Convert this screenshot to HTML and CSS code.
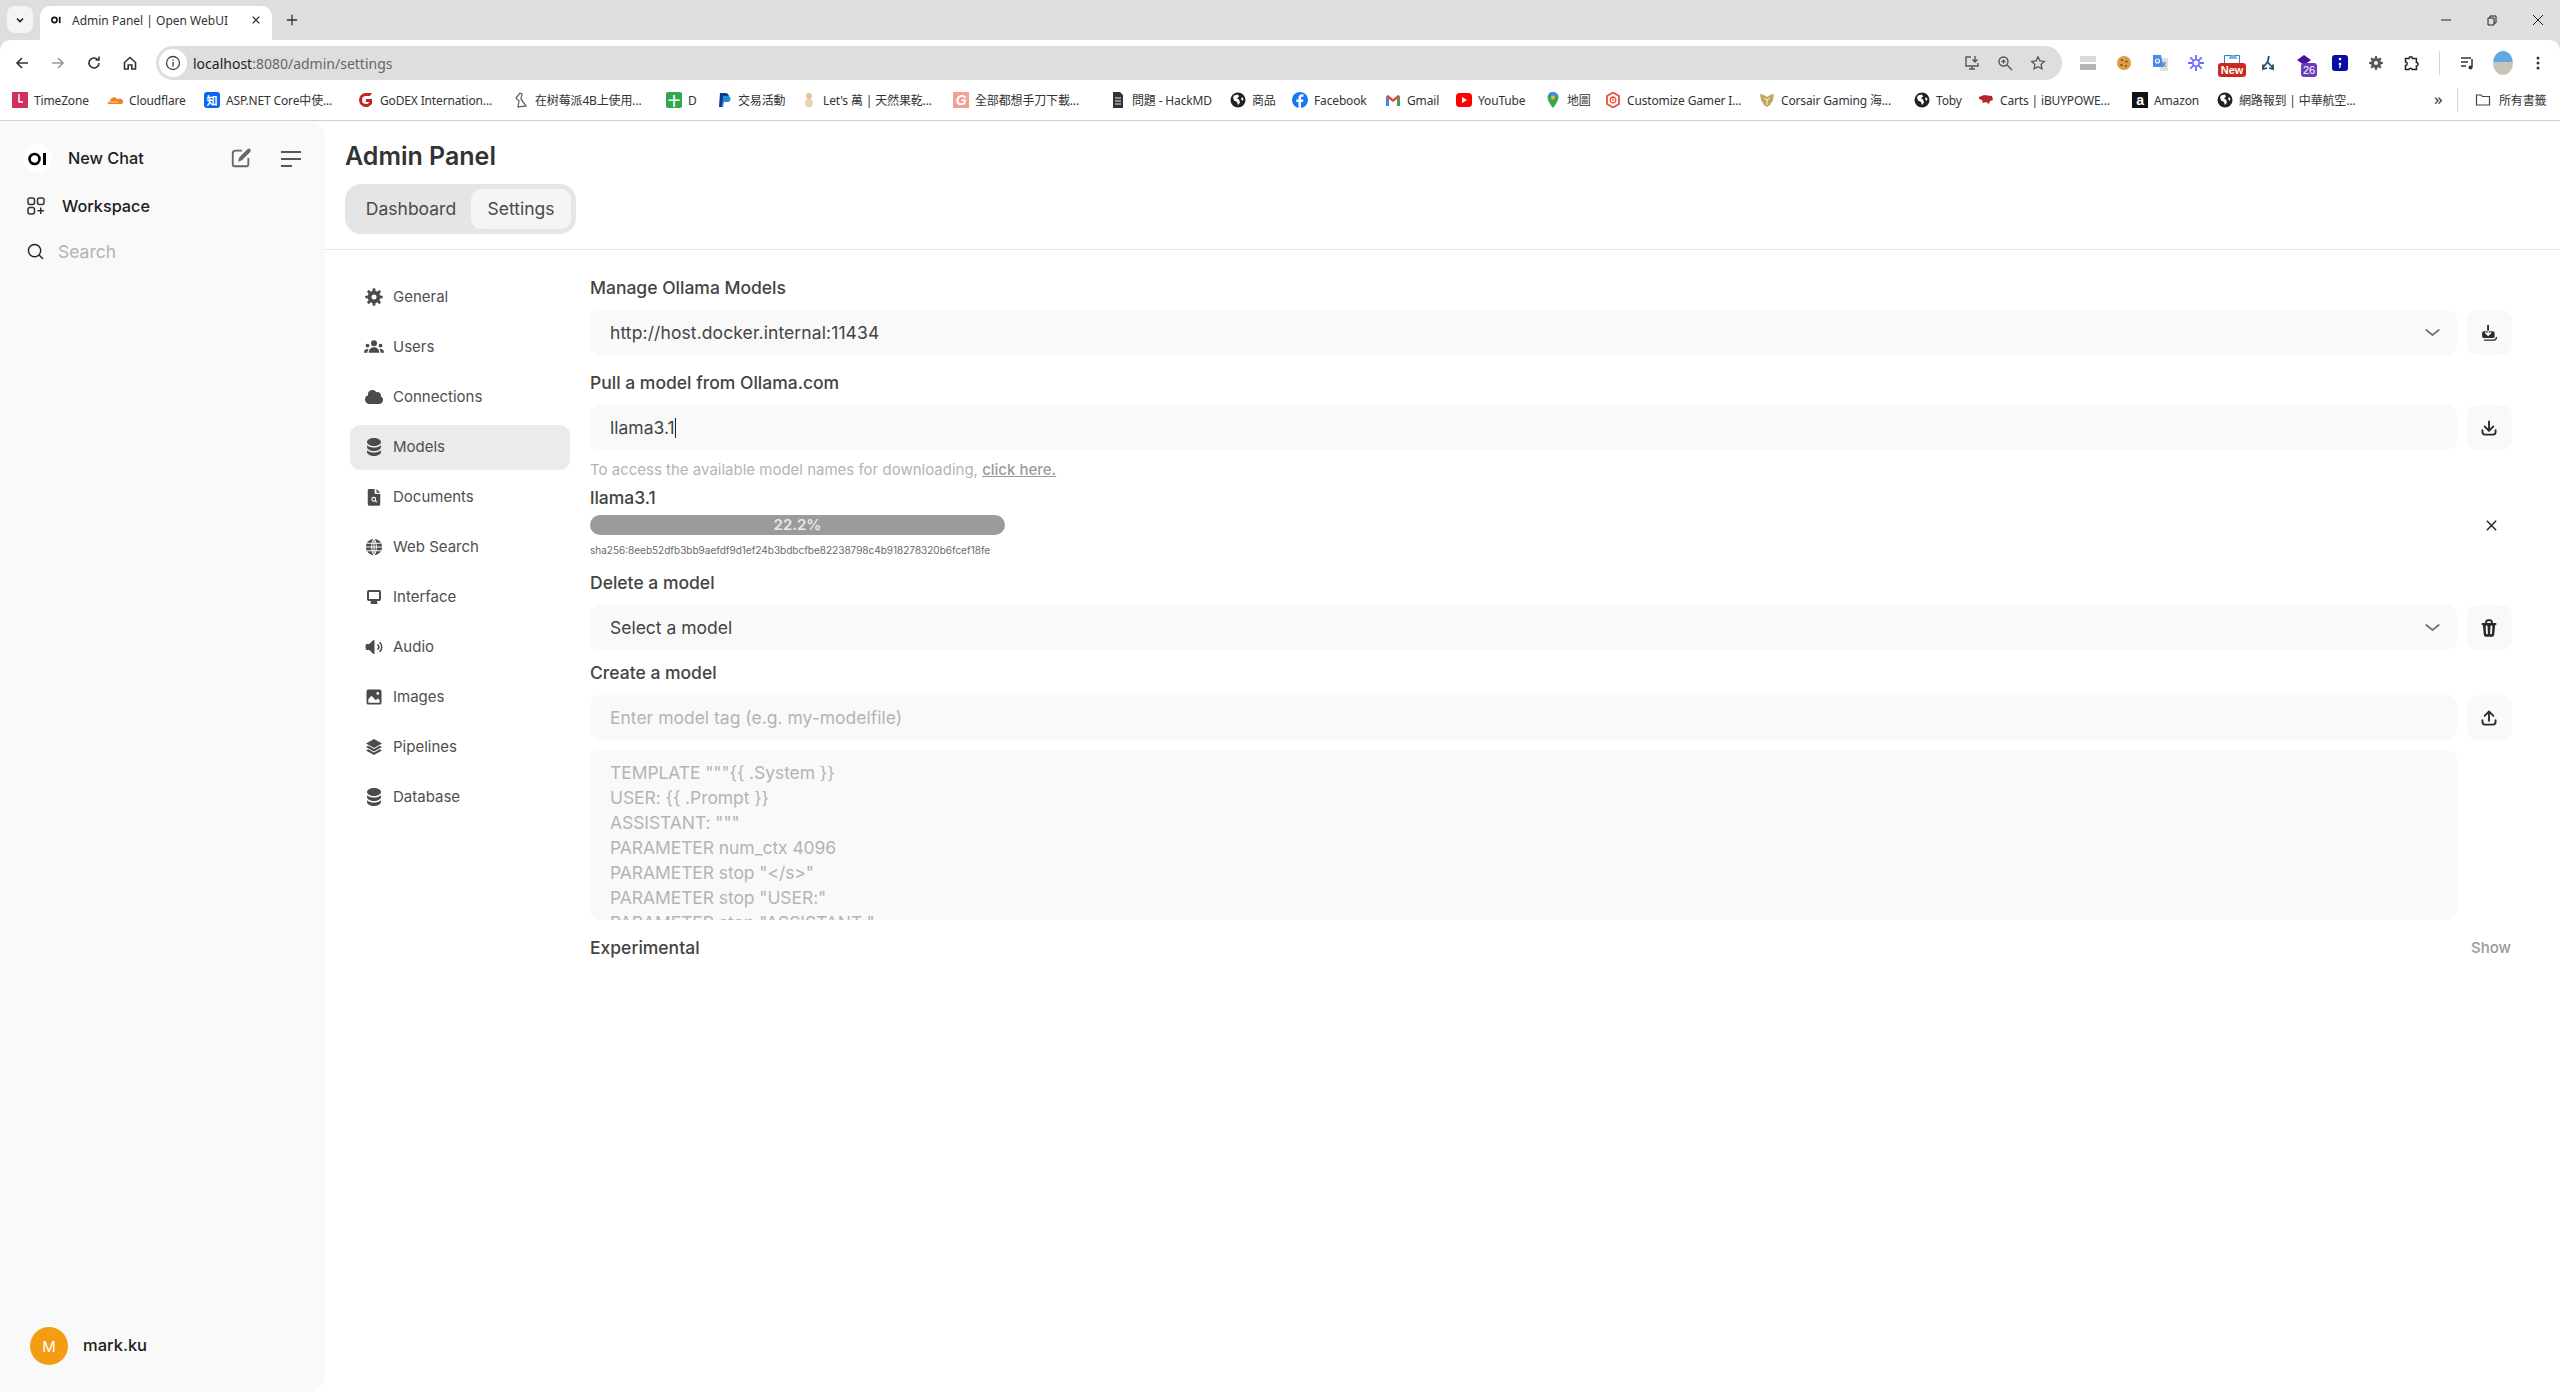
FILE: index.html
```html
<!DOCTYPE html>
<html lang="en">
<head>
<meta charset="utf-8">
<title>Admin Panel | Open WebUI</title>
<link rel="stylesheet" href="styles.css">
</head>
<body>
<svg class="defs" width="0" height="0">
  <symbol id="stack" viewBox="0 0 20 20"><path d="M10 1c3.866 0 7 1.79 7 4s-3.134 4-7 4-7-1.79-7-4 3.134-4 7-4zm5.694 8.13c.464-.264.91-.583 1.306-.952V10c0 2.21-3.134 4-7 4s-7-1.79-7-4V8.178c.396.37.842.688 1.306.953C5.838 10.006 7.854 10.5 10 10.5s4.162-.494 5.694-1.37zM3 13.179V15c0 2.21 3.134 4 7 4s7-1.79 7-4v-1.822c-.396.37-.842.688-1.306.953-1.532.875-3.548 1.369-5.694 1.369s-4.162-.494-5.694-1.37A7.009 7.009 0 013 13.179z"/></symbol>
  <symbol id="tray" viewBox="0 0 16 16"><path d="M3.5 9.75a.75.75 0 0 0-1.5 0v1.5A2.75 2.75 0 0 0 4.75 14h6.5A2.75 2.75 0 0 0 14 11.25v-1.5a.75.75 0 0 0-1.5 0v1.5c0 .69-.56 1.25-1.25 1.25h-6.5c-.69 0-1.25-.56-1.25-1.25v-1.5Z"/></symbol>
  <symbol id="chev" viewBox="0 0 20 20"><path d="M5 8l5 4 5-4" fill="none" stroke="#6b7280" stroke-width="1.4" stroke-linecap="round" stroke-linejoin="round"/></symbol>
  <symbol id="world" viewBox="0 0 16 16"><circle cx="8" cy="8" r="6.5"/><path d="M8 1.500v13M1.500 8h13M2.500 5h11M2.500 11h11M8 1.500C5.500 4 5.500 12 8 14.500M8 1.500c2.500 2.500 2.500 10.500 0 13" fill="none" stroke="#fff" stroke-width=".8"/></symbol>
  <symbol id="gl" viewBox="0 0 16 16"><circle cx="8" cy="8" r="7.500" fill="#222"/><path d="M4 3.500l4-1 1 2-2 2 2 1 1 3-2 2.500-1-3-3-1.500-1-3zM12 5l1.500 2-1 2-1.500-2z" fill="#fff"/></symbol>
  <symbol id="gear" viewBox="0 0 16 16"><path fill-rule="evenodd" d="M6.955 1.450A.5.5 0 0 1 7.452 1h1.096a.5.5 0 0 1 .497.45l.17 1.699c.484.12.94.312 1.356.562l1.321-1.081a.5.5 0 0 1 .67.033l.774.775a.5.5 0 0 1 .034.67l-1.080 1.320c.25.417.44.873.561 1.357l1.699.17a.5.5 0 0 1 .45.497v1.096a.5.5 0 0 1-.45.497l-1.699.17c-.12.484-.312.94-.562 1.356l1.082 1.322a.5.5 0 0 1-.034.67l-.774.774a.5.5 0 0 1-.67.033l-1.322-1.080c-.416.25-.872.44-1.356.561l-.17 1.699a.5.5 0 0 1-.497.45H7.452a.5.5 0 0 1-.497-.45l-.17-1.699a4.973 4.973 0 0 1-1.356-.562L4.108 13.370a.5.5 0 0 1-.67-.033l-.774-.775a.5.5 0 0 1-.034-.67l1.080-1.320a4.971 4.971 0 0 1-.561-1.357l-1.699-.17A.5.5 0 0 1 1 8.548V7.452a.5.5 0 0 1 .45-.497l1.699-.17c.12-.484.312-.94.562-1.356L2.629 4.107a.5.5 0 0 1 .034-.67l.774-.774a.5.5 0 0 1 .67-.033L5.430 3.710a4.970 4.970 0 0 1 1.356-.561l.17-1.699ZM6 8a2 2 0 1 0 4 0 2 2 0 0 0-4 0Z"/></symbol>
</svg>

<header class="chrome">
  <div class="tabstrip">
    <div class="tablist"><svg viewBox="0 0 12 12" class="ic12"><path d="M3 4.500l3 3 3-3" fill="none" stroke="#222" stroke-width="1.600"/></svg></div>
    <div class="tab">
      <span class="tab-logo"><svg viewBox="0 0 14 10" width="11" height="8"><circle cx="4.400" cy="5" r="3.300" fill="none" stroke="#111" stroke-width="2"/><rect x="10" y="1" width="2.200" height="8" fill="#111"/></svg></span>
      <span class="tab-title">Admin Panel | Open WebUI</span>
      <svg viewBox="0 0 12 12" class="ic12 tab-close"><path d="M2 2l8 8M10 2l-8 8" stroke="#333" stroke-width="1.500"/></svg>
    </div>
    <svg viewBox="0 0 14 14" class="newtab"><path d="M7 1v12M1 7h12" stroke="#333" stroke-width="1.500"/></svg>
    <div class="winctl">
      <svg viewBox="0 0 12 12" class="ic12"><path d="M1 6h10" stroke="#222" stroke-width="1"/></svg>
      <svg viewBox="0 0 12 12" class="ic12"><path d="M2 4h6v7H2zM4 4V2h6v7H8" fill="none" stroke="#222" stroke-width="1"/></svg>
      <svg viewBox="0 0 12 12" class="ic12"><path d="M1 1l10 10M11 1L1 11" stroke="#222" stroke-width="1"/></svg>
    </div>
  </div>
  <div class="toolbar">
    <div class="nav">
      <svg viewBox="0 0 16 16" class="ic16"><path d="M14 8H3M8 3L3 8l5 5" fill="none" stroke="#333" stroke-width="1.600"/></svg>
      <svg viewBox="0 0 16 16" class="ic16"><path d="M2 8h11M8 3l5 5-5 5" fill="none" stroke="#9a9a9a" stroke-width="1.600"/></svg>
      <svg viewBox="0 0 16 16" class="ic16"><path d="M13 8a5 5 0 1 1-1.500-3.600M13 1.500V5H9.500" fill="none" stroke="#333" stroke-width="1.600"/></svg>
      <svg viewBox="0 0 16 16" class="ic16"><path d="M2.500 7.500L8 2.500l5.500 5V14H9.800V10H6.200v4H2.500z" fill="none" stroke="#333" stroke-width="1.600"/></svg>
    </div>
    <div class="omnibox">
      <span class="site-info"><svg viewBox="0 0 16 16" class="ic16"><circle cx="8" cy="8" r="6.500" fill="none" stroke="#444" stroke-width="1.300"/><path d="M8 7v4.500M8 4.500v1.200" stroke="#444" stroke-width="1.400"/></svg></span>
      <span class="url"><b>localhost</b>:8080/admin/settings</span>
      <span class="omni-icons">
        <svg viewBox="0 0 16 16" class="ic16"><path d="M7 2H2v9h12V8M5 14h6M8 11v3M11 1v6M8.500 4.500L11 7l2.500-2.500" fill="none" stroke="#555" stroke-width="1.400"/></svg>
        <svg viewBox="0 0 16 16" class="ic16"><circle cx="6.500" cy="6.500" r="4.500" fill="none" stroke="#555" stroke-width="1.400"/><path d="M10 10l5 5M4.500 6.500h4M6.500 4.500v4" stroke="#555" stroke-width="1.400"/></svg>
        <svg viewBox="0 0 16 16" class="ic16"><path d="M8 1.800l1.900 4 4.400.6-3.200 3 .8 4.400L8 11.700l-3.900 2.100.8-4.400-3.200-3 4.400-.6z" fill="none" stroke="#555" stroke-width="1.300"/></svg>
      </span>
    </div>
    <div class="extensions">
      <svg viewBox="0 0 16 16" class="ic16"><path d="M0 1h16v6H0z" fill="#d9d9d9"/><path d="M0 9h16v6H0z" fill="#b5b5b5"/></svg>
      <svg viewBox="0 0 16 16" class="ic16"><circle cx="8" cy="8" r="7" fill="#dd9b45"/><circle cx="6" cy="5" r="1.100" fill="#7a4416"/><circle cx="10.500" cy="6.500" r="1.100" fill="#7a4416"/><circle cx="5.500" cy="10" r="1.100" fill="#7a4416"/><circle cx="10" cy="11" r="1" fill="#7a4416"/></svg>
      <svg viewBox="0 0 16 16" class="ic16"><path d="M6 3h10v13H8z" fill="#dcdfe3"/><path d="M1 0h8l2.500 12H1z" fill="#4a8af0"/><circle cx="5.500" cy="6" r="2" fill="none" stroke="#fff" stroke-width="1.100"/><path d="M10 8h4M12 7v1.500M10.500 12l3-3.500M11 9l3 3" stroke="#777" stroke-width=".9"/></svg>
      <svg viewBox="0 0 16 16" class="ic16"><circle cx="8" cy="8" r="3.200" fill="none" stroke="#6b6bff" stroke-width="1.500"/><path d="M8 0v4M8 12v4M0 8h4M12 8h4M2.300 2.300l3 3M10.700 10.700l3 3M13.700 2.300l-3 3M5.300 10.700l-3 3" stroke="#6b6bff" stroke-width="1.800"/></svg>
      <span class="ext-new"><svg viewBox="0 0 16 10" width="16" height="10"><path d="M.5.500h15v9H.5z" fill="#fff" stroke="#3a80b8"/><path d="M5 4a4 4 0 0 1 8 0z" fill="#7fb2d8"/></svg><span class="badge-new">New</span></span>
      <svg viewBox="0 0 16 16" class="ic16"><path d="M9 1L7.500 7 2.500 13M7.500 7l5.500 6M3 9.500l0 4.500 4-1M13 9.500l0 4.500-4-1" fill="none" stroke="#21506b" stroke-width="1.800"/></svg>
      <span class="ext-num"><svg viewBox="0 0 16 11" width="16" height="11"><path d="M8 0l7 5-7 5-7-5z" fill="#4b0fa8"/></svg><span class="badge-num">26</span></span>
      <svg viewBox="0 0 16 16" class="ic16"><rect x="0" y="0" width="16" height="16" rx="3" fill="#0a0aa8"/><circle cx="8" cy="4" r="1.300" fill="#fff"/><circle cx="8" cy="9" r="1.300" fill="#fff"/><path d="M8.500 9.500l-1 3.500" stroke="#fff" stroke-width="1.200"/></svg>
      <svg viewBox="0 0 16 16" class="ic16 ext-gear"><use href="#gear"/></svg>
      <svg viewBox="0 0 16 16" class="ic16"><path d="M1.500 3.500h3.500a1.700 1.700 0 0 1 3.400 0h4v4a1.700 1.700 0 0 1 0 3.400v3.600h-4.200a1.700 1.700 0 0 0-3.300 0H1.500v-4a1.700 1.700 0 0 0 0-3.400z" fill="none" stroke="#222" stroke-width="1.500"/></svg>
      <span class="tb-sep"></span>
      <svg viewBox="0 0 16 16" class="ic16"><path d="M1 3h10M1 7h7M1 11h5" stroke="#333" stroke-width="1.500"/><path d="M12 4v8" stroke="#333" stroke-width="1.500"/><circle cx="10.500" cy="12.500" r="2" fill="#333"/></svg>
      <span class="profile"></span>
      <svg viewBox="0 0 16 16" class="ic16"><circle cx="8" cy="3" r="1.500" fill="#333"/><circle cx="8" cy="8" r="1.500" fill="#333"/><circle cx="8" cy="13" r="1.500" fill="#333"/></svg>
    </div>
  </div>
  <nav class="bookmarks">
    <a class="bm"><svg viewBox="0 0 16 16" class="fav"><rect width="16" height="16" fill="#d0315a"/><path d="M7 2v8h4" fill="none" stroke="#fff" stroke-width="1.500"/></svg><span>TimeZone</span></a>
    <a class="bm"><svg viewBox="0 0 16 16" class="fav"><path d="M1 12a2.500 2.500 0 0 1 2-3 4 4 0 0 1 7.500-1.500A3 3 0 0 1 15 12z" fill="#f38020"/><path d="M2 10h9" stroke="#fff" stroke-width=".7"/></svg><span>Cloudflare</span></a>
    <a class="bm"><span class="favtxt fav-zh">知</span><span>ASP.NET Core中使...</span></a>
    <a class="bm"><svg viewBox="0 0 16 16" class="fav"><path d="M14 1H8A7 7 0 0 0 8 15h2l4-3V7H8v3h3v1l-2 1H8a4 4 0 0 1 0-8h4z" fill="#c4251f"/></svg><span>GoDEX Internation...</span></a>
    <a class="bm"><svg viewBox="0 0 16 16" class="fav"><path d="M7 1l2 1-1 5 5 7-8 1 1-6-3-3z" fill="none" stroke="#666" stroke-width="1.300"/></svg><span>在树莓派4B上使用...</span></a>
    <a class="bm"><span class="favtxt fav-d">十</span><span>D</span></a>
    <a class="bm"><svg viewBox="0 0 16 16" class="fav"><path d="M4 1h5a3.500 3.500 0 0 1 0 8H7l-1 6H3z" fill="#0b3b8c"/><path d="M7 4h5a3 3 0 0 1-1 6H8l-1 5H6z" fill="#2a8ad8"/></svg><span>交易活動</span></a>
    <a class="bm"><svg viewBox="0 0 16 16" class="fav"><ellipse cx="8" cy="11" rx="4" ry="4.500" fill="#e9d3b5"/><circle cx="8" cy="4" r="3" fill="#e3c49c"/></svg><span>Let's 萬 | 天然果乾...</span></a>
    <a class="bm"><span class="favtxt fav-g">G</span><span>全部都想手刀下載...</span></a>
    <a class="bm"><svg viewBox="0 0 16 16" class="fav"><path d="M3 0h7l3 3v13H3z" fill="#333"/><path d="M5 6h6M5 9h6M5 12h6" stroke="#fff" stroke-width=".9"/></svg><span>問題 - HackMD</span></a>
    <a class="bm"><svg class="fav"><use href="#gl"/></svg><span>商品</span></a>
    <a class="bm"><svg viewBox="0 0 16 16" class="fav"><circle cx="8" cy="8" r="8" fill="#1877f2"/><path d="M9 16v-6h2l.4-2.400H9V6c0-.8.4-1.300 1.400-1.300h1.100V2.500C11 2.400 10.300 2.300 9.800 2.300 7.800 2.300 6.500 3.600 6.500 5.700v1.900H4.300V10h2.200v6z" fill="#fff"/></svg><span>Facebook</span></a>
    <a class="bm"><svg viewBox="0 0 16 16" class="fav"><path d="M1 14V4l3 2v8z" fill="#4285f4"/><path d="M15 14V4l-3 2v8z" fill="#34a853"/><path d="M1 4l2-1 5 4 5-4 2 1-3 3-4 3-4-3z" fill="#ea4335"/></svg><span>Gmail</span></a>
    <a class="bm"><svg viewBox="0 0 16 16" class="fav"><rect y="1" width="16" height="14" rx="3.500" fill="#f00"/><path d="M6 5l5 3-5 3z" fill="#fff"/></svg><span>YouTube</span></a>
    <a class="bm"><svg viewBox="0 0 16 16" class="fav"><path d="M8 0a5.500 5.500 0 0 0-5.500 5.500C2.500 9.500 8 16 8 16s5.500-6.500 5.500-10.500A5.500 5.500 0 0 0 8 0z" fill="#34a853"/><path d="M4 1.500A5.500 5.500 0 0 1 13 3.500L8 8z" fill="#4285f4"/><circle cx="8" cy="5.500" r="2" fill="#fbbc04"/></svg><span>地圖</span></a>
    <a class="bm"><svg viewBox="0 0 16 16" class="fav"><path d="M8 .5l6 3.500v8l-6 3.500L2 12V4z" fill="none" stroke="#e8523a" stroke-width="1.800"/><circle cx="8" cy="8" r="2.800" fill="none" stroke="#e8523a" stroke-width="1.200"/><path d="M8 4v5" stroke="#e8523a" stroke-width="1.200"/></svg><span>Customize Gamer I...</span></a>
    <a class="bm"><svg viewBox="0 0 16 16" class="fav"><path d="M1 2l4 1 3 2 3-2 4-1-1 6-3 5-3 2-3-2-3-5z" fill="#c4a45a"/><path d="M5 6l3 2 3-2M8 8v5" stroke="#fff" stroke-width=".9" fill="none"/></svg><span>Corsair Gaming 海...</span></a>
    <a class="bm"><svg class="fav"><use href="#gl"/></svg><span>Toby</span></a>
    <a class="bm"><svg viewBox="0 0 16 16" class="fav"><path d="M1 5l5-2 8 1 1 4-3 1-1 3-3-2-3 1-1-3-3-1z" fill="#b3262a"/></svg><span>Carts | iBUYPOWE...</span></a>
    <a class="bm"><span class="favtxt fav-am">a</span><span>Amazon</span></a>
    <a class="bm"><svg class="fav"><use href="#gl"/></svg><span>網路報到 | 中華航空...</span></a>
    <span class="bm-more">»</span>
    <span class="bm-sep"></span>
    <a class="bm bm-all"><svg viewBox="0 0 16 16" class="ic16"><path d="M1.500 3h4.500l1.500 1.500h7V13h-13z" fill="none" stroke="#444" stroke-width="1.200"/></svg><span>所有書籤</span></a>
  </nav>
</header>

<div class="app">
  <aside class="sidebar">
    <div class="side-top">
      <div class="side-row newchat">
        <span class="logo"><svg viewBox="0 0 20 14" width="20" height="14"><circle cx="6.500" cy="7" r="5" fill="none" stroke="#000" stroke-width="2.600"/><rect x="15" y="1" width="3" height="12"/></svg></span>
        <span class="newchat-label">New Chat</span>
        <svg viewBox="0 0 24 24" class="ic-pencil"><path d="M13 4H6a3 3 0 0 0-3 3v12a2 2 0 0 0 2 2h13a2 2 0 0 0 2-2v-7" fill="none" stroke="#666" stroke-width="2"/><path d="M9 16l1-4.500L19 2.500a2 2 0 0 1 3 3l-9 9z" fill="#666"/></svg>
        <svg viewBox="0 0 20 20" class="ic-menu"><path d="M0 3h20M0 10h20M0 17h11" stroke="#555" stroke-width="2"/></svg>
      </div>
      <div class="side-row workspace">
        <svg viewBox="0 0 18 18" class="ic-work"><g fill="none" stroke="#333" stroke-width="1.500"><rect x="1" y="1" width="6.500" height="6.500" rx="2"/><rect x="10.500" y="1" width="6.500" height="6.500" rx="2"/><rect x="1" y="10.500" width="6.500" height="6.500" rx="2"/><path d="M13.750 10.500v6.500M10.500 13.750H17"/></g></svg>
        <span>Workspace</span>
      </div>
      <div class="side-row search">
        <svg viewBox="0 0 18 18" class="ic-search"><circle cx="8" cy="8" r="6.500" fill="none" stroke="#222" stroke-width="1.500"/><path d="M13 13l4 4" stroke="#222" stroke-width="1.500"/></svg>
        <span>Search</span>
      </div>
    </div>
    <div class="side-user">
      <span class="avatar">M</span>
      <span class="username">mark.ku</span>
    </div>
  </aside>

  <main class="main">
    <div class="page-head">
      <h1 class="page-title">Admin Panel</h1>
      <div class="tabs">
        <span class="tabs-item">Dashboard</span>
        <span class="tabs-item is-active">Settings</span>
      </div>
    </div>
    <div class="page-rule"></div>
    <div class="settings">
      <ul class="snav">
        <li class="snav-item"><svg viewBox="0 0 16 16" class="snav-ic"><use href="#gear"/></svg><span>General</span></li>
        <li class="snav-item"><svg viewBox="0 0 16 16" class="snav-ic"><circle cx="8" cy="5" r="2.400"/><path d="M3.800 12.500c0-2.700 1.900-4.300 4.200-4.300s4.200 1.600 4.200 4.300z"/><circle cx="2.800" cy="6.800" r="1.500"/><circle cx="13.200" cy="6.800" r="1.500"/><path d="M0 12.500c0-2 1-3 2.700-3 .4 0 .7.100 1 .2-.6.700-1 1.700-1 2.800zM16 12.500c0-2-1-3-2.700-3-.4 0-.7.100-1 .2.600.7 1 1.700 1 2.800z"/></svg><span>Users</span></li>
        <li class="snav-item"><svg viewBox="0 0 20 20" class="snav-ic"><path d="M1 12.500A4.500 4.500 0 005.500 17H15a4 4 0 001.866-7.539 3.504 3.504 0 00-4.504-4.272A4.500 4.500 0 004.060 8.235 4.502 4.502 0 001 12.500z"/></svg><span>Connections</span></li>
        <li class="snav-item is-active"><svg class="snav-ic"><use href="#stack"/></svg><span>Models</span></li>
        <li class="snav-item"><svg viewBox="0 0 16 16" class="snav-ic"><path d="M4 1.500h4.500v3a1 1 0 0 0 1 1H13v8a1.500 1.500 0 0 1-1.500 1.500h-7A1.500 1.500 0 0 1 3 13.500v-11a1 1 0 0 1 1-1z"/><path d="M10 1.500l3 3h-3z"/><circle cx="7.800" cy="9.800" r="1.500" fill="none" stroke="#fff" stroke-width=".9"/><path d="M9 11l1.200 1.200" stroke="#fff" stroke-width=".9"/></svg><span>Documents</span></li>
        <li class="snav-item"><svg class="snav-ic"><use href="#world"/></svg><span>Web Search</span></li>
        <li class="snav-item"><svg viewBox="0 0 20 20" class="snav-ic"><path fill-rule="evenodd" d="M5 3h10a2 2 0 0 1 2 2v7a2 2 0 0 1-2 2H5a2 2 0 0 1-2-2V5a2 2 0 0 1 2-2zm0 2v7h10V5z"/><path d="M7 14h6l.500 3h-7z"/></svg><span>Interface</span></li>
        <li class="snav-item"><svg viewBox="0 0 20 20" class="snav-ic"><path d="M10.500 3.750a.75.75 0 0 0-1.264-.546L5.203 7H2.667a.75.75 0 0 0-.7.48A6.985 6.985 0 0 0 1.500 10c0 .887.165 1.737.468 2.520.111.29.39.48.7.48h2.535l4.033 3.796a.75.75 0 0 0 1.264-.546V3.750ZM16.450 5.050a.75.75 0 0 0-1.060 1.061 5.500 5.500 0 0 1 0 7.778.75.75 0 0 0 1.060 1.060 7 7 0 0 0 0-9.899Z"/><path d="M14.329 7.172a.75.75 0 0 0-1.061 1.060 2.500 2.500 0 0 1 0 3.536.75.75 0 0 0 1.060 1.060 4 4 0 0 0 0-5.656Z"/></svg><span>Audio</span></li>
        <li class="snav-item"><svg viewBox="0 0 16 16" class="snav-ic"><path fill-rule="evenodd" d="M3.500 2h9A1.500 1.500 0 0 1 14 3.500v9a1.500 1.500 0 0 1-1.500 1.500h-9A1.500 1.500 0 0 1 2 12.500v-9A1.500 1.500 0 0 1 3.500 2zM3.500 12.500h9v-2L11 9l-1.500 1.500L6 7l-2.500 2.500zM11 4a1.100 1.100 0 1 0 0 2.200A1.100 1.100 0 0 0 11 4z"/></svg><span>Images</span></li>
        <li class="snav-item"><svg viewBox="0 0 20 20" class="snav-ic"><path d="M10 2l8 4.500L10 11 2 6.500z"/><path d="M4.200 8.800L2 10l8 4.500 8-4.500-2.200-1.200L10 12z"/><path d="M4.200 12.300L2 13.500 10 18l8-4.500-2.200-1.200L10 15.500z"/></svg><span>Pipelines</span></li>
        <li class="snav-item"><svg class="snav-ic"><use href="#stack"/></svg><span>Database</span></li>
      </ul>

      <section class="models">
        <label class="field-label first">Manage Ollama Models</label>
        <div class="field-row">
          <div class="control select"><span class="host">http://host.docker.internal:11434</span><svg class="chev"><use href="#chev"/></svg></div>
          <button class="icon-btn"><svg viewBox="0 0 16 16" class="btn-ic"><path d="M4 6.500h2.500V2.200a.7.700 0 0 1 1.500 0V6.500h3a1.500 1.500 0 0 1 1.500 1.500v2.500a1.500 1.500 0 0 1-1.500 1.500H4a1.500 1.500 0 0 1-1.500-1.500V8A1.500 1.500 0 0 1 4 6.500z" fill="#2a2a2a"/><path d="M7.300 6v3.500M5 7.500l2.300 2.300 2.300-2.300" stroke="#f9f9f9" stroke-width="1.200" fill="none"/><path d="M4 13.700h8a2 2 0 0 0 1.800-2.500" stroke="#2a2a2a" stroke-width="1.100" fill="none"/></svg></button>
        </div>
        <label class="field-label">Pull a model from Ollama.com</label>
        <div class="field-row">
          <div class="control"><span>llama3.1</span><span class="caret"></span></div>
          <button class="icon-btn"><svg viewBox="0 0 16 16" class="btn-ic"><path d="M8.750 2.750a.75.75 0 0 0-1.500 0v5.690L5.030 6.220a.75.75 0 0 0-1.060 1.060l3.500 3.500a.75.75 0 0 0 1.060 0l3.500-3.500a.75.75 0 0 0-1.060-1.060L8.750 8.440V2.750Z"/><use href="#tray"/></svg></button>
        </div>
        <p class="hint">To access the available model names for downloading, <a class="hint-link">click here.</a></p>
        <div class="pull">
          <div class="pull-main">
            <div class="pull-name">llama3.1</div>
            <div class="progress"><div class="progress-track">22.2%</div></div>
            <div class="digest">sha256:8eeb52dfb3bb9aefdf9d1ef24b3bdbcfbe82238798c4b918278320b6fcef18fe</div>
          </div>
          <svg viewBox="0 0 16 16" class="pull-x"><path d="M3 3l10 10M13 3L3 13" stroke="#222" stroke-width="1.500"/></svg>
        </div>
        <label class="field-label tight">Delete a model</label>
        <div class="field-row">
          <div class="control select"><span>Select a model</span><svg class="chev"><use href="#chev"/></svg></div>
          <button class="icon-btn"><svg viewBox="0 0 16 16" class="btn-ic"><path fill-rule="evenodd" d="M5 3.250V4H2.750a.75.75 0 0 0 0 1.500h.3l.815 8.150A1.500 1.500 0 0 0 5.357 15h5.285a1.500 1.500 0 0 0 1.493-1.350l.815-8.150h.3a.75.75 0 0 0 0-1.500H11v-.75A2.250 2.250 0 0 0 8.750 1h-1.500A2.250 2.250 0 0 0 5 3.250Zm2.250-.75a.75.75 0 0 0-.75.75V4h3v-.75a.75.75 0 0 0-.75-.75h-1.500ZM6.050 6a.75.75 0 0 1 .787.713l.275 5.500a.75.75 0 0 1-1.498.075l-.275-5.500A.75.75 0 0 1 6.050 6Zm3.900 0a.75.75 0 0 1 .712.787l-.275 5.500a.75.75 0 0 1-1.498-.075l.275-5.500a.75.75 0 0 1 .786-.711Z"/></svg></button>
        </div>
        <label class="field-label tight2">Create a model</label>
        <div class="field-row">
          <div class="control placeholder"><span>Enter model tag (e.g. my-modelfile)</span></div>
          <button class="icon-btn"><svg viewBox="0 0 16 16" class="btn-ic"><path d="M7.250 10.250a.75.75 0 0 0 1.500 0V4.560l2.220 2.220a.75.75 0 1 0 1.060-1.060l-3.500-3.500a.75.75 0 0 0-1.060 0l-3.500 3.500a.75.75 0 0 0 1.060 1.060l2.220-2.220v5.690Z"/><use href="#tray"/></svg></button>
        </div>
        <div class="textarea-row">
          <div class="textarea">TEMPLATE """{{ .System }}
USER: {{ .Prompt }}
ASSISTANT: """
PARAMETER num_ctx 4096
PARAMETER stop "&lt;/s&gt;"
PARAMETER stop "USER:"
PARAMETER stop "ASSISTANT:"</div>
        </div>
        <div class="exp-row">
          <span class="exp-title">Experimental</span>
          <span class="exp-show">Show</span>
        </div>
      </section>
    </div>
  </main>
</div>
</body>
</html>
```
FILE: styles.css
```css
* { box-sizing: border-box; }
html, body { margin: 0; height: 100%; }
body {
  width: 2560px; height: 1392px; overflow: hidden; background: #fff;
  font-family: Inter, "Noto Sans CJK TC", sans-serif; color: #333;
  display: flex; flex-direction: column;
}
.defs { position: absolute; }
svg { display: block; flex: none; }
.ic12 { width: 12px; height: 12px; }
.ic16 { width: 16px; height: 16px; }

/* browser chrome */
.chrome { flex: none; background: #dedede; font-family: "Noto Sans", "Noto Sans CJK TC", sans-serif; }
.tabstrip { height: 40px; display: flex; align-items: flex-end; position: relative; padding-left: 7px; }
.tablist { width: 26px; height: 27px; margin-bottom: 7px; background: #f4f4f4; border-radius: 8px; display: flex; align-items: center; justify-content: center; }
.tab { width: 232px; height: 34px; margin-left: 7px; background: #fff; border-radius: 10px 10px 0 0; display: flex; align-items: center; padding: 0 10px 6px 10px; font-size: 12px; color: #333; }
.tab-logo { width: 22px; display: block; padding-left: 1px; }
.tab-title { flex: 1; white-space: nowrap; }
.tab-close { width: 10px; height: 10px; margin-right: 1px; }
.newtab { width: 12px; height: 12px; margin: 0 0 14px 14px; }
.winctl { margin-left: auto; display: flex; gap: 34px; padding-right: 16px; margin-bottom: 14px; }

.toolbar { height: 40px; background: #fff; border-radius: 10px 10px 0 0; display: flex; align-items: flex-start; padding-top: 6px; padding-left: 14px; }
.nav { display: flex; gap: 20px; width: 142px; align-items: center; height: 34px; }
.omnibox { width: 1906px; height: 34px; background: #dedede; border-radius: 17px; display: flex; align-items: center; padding: 0 16px 0 3px; }
.site-info { width: 28px; height: 28px; border-radius: 50%; background: #fff; display: flex; align-items: center; justify-content: center; }
.url { margin-left: 6px; font-size: 14px; color: #666; white-space: nowrap; flex: 1; }
.url b { font-weight: 400; color: #222; }
.omni-icons { display: flex; gap: 17px; }
.extensions { display: flex; align-items: center; height: 34px; gap: 20px; padding-left: 18px; }
.ext-new { position: relative; width: 16px; height: 16px; }
.badge-new { position: absolute; left: -6px; top: 8px; width: 28px; height: 14px; background: #c92a1e; color: #fff; font-size: 11px; font-weight: 700; line-height: 14px; text-align: center; border-radius: 3px; font-family: "Liberation Sans", sans-serif; }
.ext-num { position: relative; width: 16px; height: 16px; }
.badge-num { position: absolute; left: 5px; top: 8px; width: 16px; height: 14px; background: #6a3db8; color: #fff; font-size: 11px; line-height: 14px; text-align: center; border-radius: 3px; font-family: "Liberation Sans", sans-serif; }
.ext-gear { fill: #555; }
.tb-sep { width: 1px; height: 24px; background: #d6d6d6; margin: 0 0 0 -1px; }
.profile { width: 20px; height: 24px; border-radius: 50%; background: linear-gradient(#5fa8e0 0 45%, #c9c4b8 45%); margin: 0 -3px; }

.bookmarks {
  height: 41px; background: #fff; border-bottom: 1px solid #cfcfcf;
  display: grid; align-items: center; padding-left: 12px; font-size: 12px; color: #333;
  grid-template-columns: 95px 97px 154px 155px 153px 50px 85px 152px 157px 120px 62px 93px 71px 89px 60px 154px 155px 64px 154px 85px 217px 23px 18px 85px;
}
.bm { display: flex; align-items: center; gap: 6px; white-space: nowrap; min-width: 0; letter-spacing: -.15px; }
.bm-more { font-size: 17px; line-height: 1; padding-bottom: 4px; }
.bm-sep { width: 1px; height: 24px; background: #d6d6d6; }
.bm-all { gap: 8px; }
.fav { width: 16px; height: 16px; }
.favtxt { width: 16px; height: 16px; flex: none; display: flex; align-items: center; justify-content: center; font-size: 11px; font-weight: 700; color: #fff; font-family: "Liberation Sans", "Noto Sans CJK TC", sans-serif; }
.fav-zh { background: #0a66f0; border-radius: 3px; }
.fav-d { background: #2fa84f; border-radius: 2px; font-size: 12px; }
.fav-g { background: #f2a096; font-style: italic; font-size: 14px; }
.fav-am { background: #111; font-size: 14px; }

/* app */
.app { flex: 1; display: flex; min-height: 0; }
.sidebar { width: 325px; flex: none; background: #f9f9f9; border-radius: 0 16px 16px 0; display: flex; flex-direction: column; justify-content: space-between; }
.side-top { padding: 23px 22px 0 23px; }
.side-row { display: flex; align-items: center; font-size: 16.250px; color: #1c1c1c; }
.newchat { height: 29px; }
.logo { width: 29px; height: 29px; border-radius: 50%; background: #fff; display: flex; align-items: center; justify-content: center; }
.newchat-label { margin-left: 16px; flex: 1; font-weight: 500; padding-bottom: 1px; }
.ic-pencil { width: 22px; height: 22px; margin: 0 29px 1px 0; }
.ic-menu { width: 20px; height: 20px; margin-right: 2px; }
.workspace { margin-top: 18px; height: 29px; padding-left: 4px; gap: 17px; font-weight: 500; }
.ic-work { width: 18px; height: 18px; }
.search { margin-top: 17px; height: 29px; padding-left: 4px; gap: 14px; color: #b4b4b4; font-size: 17.500px; }
.ic-search { width: 17px; height: 17px; }
.side-user { display: flex; align-items: center; gap: 15px; padding: 0 0 27px 30px; }
.avatar { width: 38px; height: 38px; border-radius: 50%; background: #f49d14; color: #fff; font-size: 15px; display: flex; align-items: center; justify-content: center; }
.username { font-size: 16.500px; font-weight: 500; color: #1c1c1c; padding-bottom: 2px; }

.main { flex: 1; min-width: 0; }
.page-head { padding: 20px 0 0 20px; height: 128px; }
.page-title { margin: 0; font-size: 25px; line-height: 30px; font-weight: 600; color: #333; }
.tabs { margin-top: 13px; width: 231px; height: 50px; background: #e5e5e5; border-radius: 16px; display: flex; align-items: center; padding: 5px; font-size: 17.500px; color: #4a4a4a; }
.tabs-item { width: 121px; text-align: center; padding: 0 0 1px 1px; font-weight: 400; }
.tabs-item.is-active { width: 100px; height: 40px; line-height: 39px; background: #f5f5f5; border-radius: 10px; padding: 0; margin-left: auto; }
.page-rule { height: 1px; background: #e5e5e5; }

.settings { display: flex; padding: 27px 48px 0 25px; gap: 20px; }
.snav { list-style: none; margin: -2px 0 0; padding: 0; width: 220px; flex: none; display: flex; flex-direction: column; gap: 5px; }
.snav-item { height: 45px; border-radius: 10px; display: flex; align-items: center; padding: 0 15px 2px 14px; gap: 9px; font-size: 15px; font-weight: 400; color: #4f4f4f; }
.snav-item.is-active { background: #ebebeb; }
.snav-ic { width: 20px; height: 20px; fill: #4b4b4b; }

.models { flex: 1; min-width: 0; font-size: 17.500px; }
.field-label { display: block; height: 22px; line-height: 22px; font-weight: 500; color: #444; margin: 17px 0 11px; }
.field-label.first { margin-top: 0; }
.field-label.tight { margin-top: 0; }
.field-label.tight2 { margin-top: 12px; }
.field-row { display: flex; gap: 10px; }
.control { flex: 1; height: 45px; background: #f9f9f9; border-radius: 10px; display: flex; align-items: center; padding: 0 15px 0 20px; color: #444; white-space: nowrap; }
.select span { flex: 1; }
.host { letter-spacing: .1px; }
.chev { width: 25px; height: 25px; margin-right: -3px; }
.caret { width: 1px; height: 20px; background: #222; }
.placeholder { color: #b4b4b4; }
.icon-btn { width: 45px; height: 45px; flex: none; border: 0; padding: 0 1px 0 0; background: #f9f9f9; border-radius: 10px; display: flex; align-items: center; justify-content: center; }
.btn-ic { width: 20px; height: 20px; fill: #2a2a2a; }
.hint { margin: 10px 0 7px; height: 20px; line-height: 20px; font-size: 15px; color: #b4b4b4; white-space: nowrap; }
.hint-link { color: #9a9a9a; font-weight: 500; text-decoration: underline; }
.pull { display: flex; align-items: center; margin-bottom: 16px; }
.pull-main { width: 415px; }
.pull-name { height: 22px; line-height: 22px; font-weight: 500; color: #444; margin-bottom: 6px; }
.progress { height: 20px; }
.progress-track { height: 20px; border-radius: 10px; background: #9b9b9b; color: #e8e8e8; font-size: 15px; font-weight: 600; line-height: 20px; text-align: center; }
.digest { margin-top: 9px; height: 12px; line-height: 12px; font-size: 10px; color: #6a6a6a; white-space: nowrap; }
.pull-x { width: 15px; height: 15px; margin: 7px 13px 0 auto; }
.textarea-row { margin-top: 10px; padding-right: 55px; }
.textarea { height: 170px; overflow: hidden; background: #f9f9f9; border-radius: 10px; padding: 10px 20px 0; line-height: 25px; white-space: pre; color: #b4b4b4; letter-spacing: -.08px; }
.exp-row { margin-top: 17px; height: 22px; display: flex; align-items: center; justify-content: space-between; padding-bottom: 2px; }
.exp-title { font-weight: 500; color: #444; }
.exp-show { font-size: 15px; font-weight: 500; color: #9a9a9a; margin-right: 1px; }
```
